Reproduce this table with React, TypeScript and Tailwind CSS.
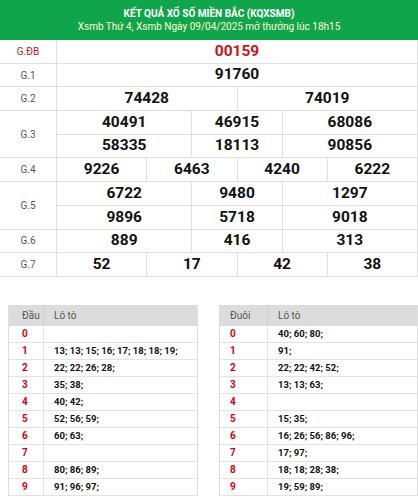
import React from 'react';

const prizes: { label: string; nums: string[]; span: string; red?: boolean; rows?: number }[] = [
  { label: 'G.ĐB', nums: ['00159'], span: 'col-span-8', red: true },
  { label: 'G.1', nums: ['91760'], span: 'col-span-8' },
  { label: 'G.2', nums: ['74428', '74019'], span: 'col-span-4' },
  { label: 'G.3', nums: ['40491', '46915', '68086', '58335', '18113', '90856'], span: '353', rows: 2 },
  { label: 'G.4', nums: ['9226', '6463', '4240', '6222'], span: 'col-span-2' },
  { label: 'G.5', nums: ['6722', '9480', '1297', '9896', '5718', '9018'], span: '353', rows: 2 },
  { label: 'G.6', nums: ['889', '416', '313'], span: '353' },
  { label: 'G.7', nums: ['52', '17', '42', '38'], span: 'col-span-2' },
];

const dau = [
  '',
  '13; 13; 15; 16; 17; 18; 18; 19;',
  '22; 22; 26; 28;',
  '35; 38;',
  '40; 42;',
  '52; 56; 59;',
  '60; 63;',
  '',
  '80; 86; 89;',
  '91; 96; 97;',
];

const duoi = [
  '40; 60; 80;',
  '91;',
  '22; 22; 42; 52;',
  '13; 13; 63;',
  '',
  '15; 35;',
  '16; 26; 56; 86; 96;',
  '17; 97;',
  '18; 18; 28; 38;',
  '19; 59; 89;',
];

// G.3, G.5, G.6 split 8 columns as 3 / 2 / 3
const spanFor = (span: string, i: number) => {
  if (span !== '353') return span;
  return i % 3 === 1 ? 'col-span-2' : 'col-span-3';
};

const LotoTable = ({ head, rows, first, pad }: { head: string; rows: string[]; first: string; pad: string }) => (
  <div className="border-l border-r border-[#dedede]">
    <div className="flex h-[21px] bg-[#dcdcdc] text-[10px] text-[#555] items-center">
      <div className={`${first} ${pad} h-full flex items-center border-r border-[#d0d0d0]`}>{head}</div>
      <div className="flex-1 pl-[10px]">Lô tô</div>
    </div>
    {rows.map((r, i) => (
      <div key={i} className="flex h-[17px] border-b border-[#e2e2e2] items-center">
        <div className={`${first} ${pad} h-full flex items-center border-r border-[#e2e2e2] text-[10px] font-bold text-[#d0021b]`}>{i}</div>
        <div className="flex-1 pl-[10px] text-[9.5px] font-bold text-[#111]">{r}</div>
      </div>
    ))}
  </div>
);

export default function App() {
  return (
    <div className="w-[418px] h-[498px] overflow-hidden bg-white" style={{ fontFamily: 'Roboto, "Liberation Sans", sans-serif' }}>
      <div className="h-[40px] bg-[#10a54a] flex flex-col items-center justify-center">
        <div className="text-[10px] font-bold text-white leading-[13px]">KẾT QUẢ XỔ SỐ MIỀN BẮC (KQXSMB)</div>
        <div className="text-[10px] text-[#fffbd6] leading-[13px]">Xsmb Thứ 4, Xsmb Ngày 09/04/2025 mở thưởng lúc 18h15</div>
      </div>

      <div className="grid grid-cols-[57px_repeat(8,minmax(0,1fr))] auto-rows-[23.7px]">
        {prizes.map((p) => (
          <React.Fragment key={p.label}>
            <div
              className={`${p.rows === 2 ? 'row-span-2' : ''} border-r border-b border-[#e0e0e0] flex items-center justify-center text-[10px] ${p.red ? 'text-[#c4161c]' : 'text-[#555]'}`}
            >
              {p.label}
            </div>
            {p.nums.map((n, i) => (
              <div
                key={i}
                className={`${spanFor(p.span, i)} ${p.span === '353' && i % 3 === 0 ? 'col-start-2' : ''} border-r border-b border-[#e0e0e0] flex items-center justify-center text-[15.5px] font-bold ${p.red ? 'text-[#c4161c]' : 'text-[#111]'}`}
              >
                {n}
              </div>
            ))}
          </React.Fragment>
        ))}
      </div>

      <div className="flex pl-[8px] mt-[28px]">
        <div className="w-[190px]">
          <LotoTable head="Đầu" rows={dau} first="w-[35px]" pad="pl-[13px]" />
        </div>
        <div className="flex-1 ml-[21px]">
          <LotoTable head="Đuôi" rows={duoi} first="w-[48px]" pad="pl-[10px]" />
        </div>
      </div>
    </div>
  );
}
